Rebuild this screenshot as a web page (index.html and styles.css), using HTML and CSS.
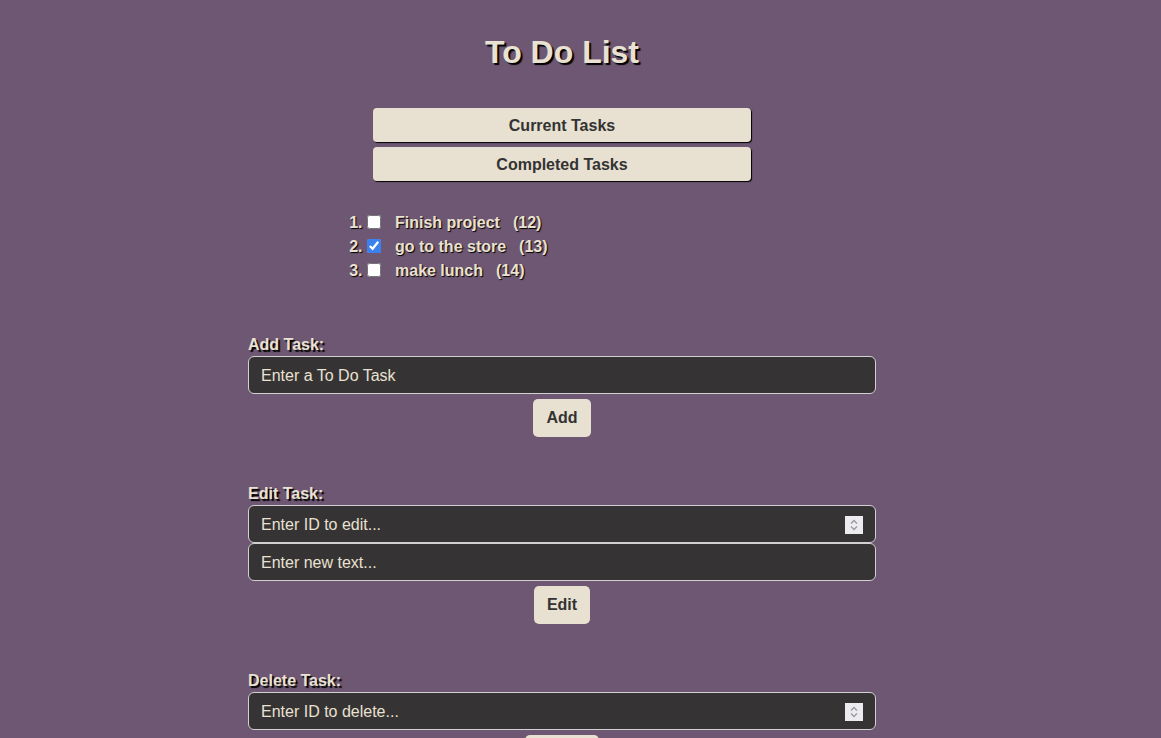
FILE: index.html
```html
<!DOCTYPE html>
<html>
<head>
<meta charset="utf-8">
<title>To Do List</title>
<link rel="stylesheet" href="styles.css">
</head>
<body>
<div class="app">
  <h1 class="title">To Do List</h1>
  <div class="tabs">
    <button class="tab">Current Tasks</button>
    <button class="tab">Completed Tasks</button>
  </div>
  <ol class="task-list">
    <li><input type="checkbox" class="check"><span class="task-text">Finish project</span><span class="task-id">(12)</span></li>
    <li><input type="checkbox" class="check" checked><span class="task-text">go to the store</span><span class="task-id">(13)</span></li>
    <li><input type="checkbox" class="check"><span class="task-text">make lunch</span><span class="task-id">(14)</span></li>
  </ol>
  <section class="form-block">
    <label class="form-label">Add Task:</label>
    <input class="field" type="text" placeholder="Enter a To Do Task">
    <button class="action">Add</button>
  </section>
  <section class="form-block">
    <label class="form-label">Edit Task:</label>
    <div class="stack">
      <input class="field" type="number" placeholder="Enter ID to edit...">
      <input class="field" type="text" placeholder="Enter new text...">
    </div>
    <button class="action">Edit</button>
  </section>
  <section class="form-block">
    <label class="form-label">Delete Task:</label>
    <input class="field" type="number" placeholder="Enter ID to delete...">
    <button class="action">Delete</button>
  </section>
</div>
</body>
</html>
```

FILE: styles.css
```css
html, body {
  margin: 0;
  background: #6e5773;
}
body {
  padding: 13px 37px 40px 0;
  font-family: "Liberation Sans", Arial, sans-serif;
  color: #e9e1d1;
}
.app {
  width: 628px;
  margin: 0 auto;
  display: flex;
  flex-direction: column;
}
.title {
  margin: 21px 0 21px;
  font-size: 32px;
  line-height: 37px;
  text-align: center;
  color: #e9e1d1;
  text-shadow: 2px 2px 1px #000;
}
.tabs {
  margin-top: 16px;
  display: flex;
  flex-direction: column;
  align-items: center;
  gap: 5px;
}
.tab {
  width: 378px;
  height: 34px;
  border: none;
  border-radius: 4px;
  background: #e8e0d0;
  color: #333;
  font-family: "Liberation Sans", Arial, sans-serif;
  font-weight: bold;
  font-size: 16px;
  box-shadow: 1px 1px 1px #000;
  padding: 1px 0 0;
}
.task-list {
  margin: 30px 0 0;
  padding-left: 119px;
  font-weight: bold;
  font-size: 16px;
  line-height: 24px;
  text-shadow: 1px 1px 1px #000;
}
.check {
  width: 14px;
  height: 14px;
  margin: 0 3px 0 0;
  vertical-align: -1px;
  accent-color: #3a80ee;
}
.task-text {
  margin-left: 11px;
}
.task-id {
  margin-left: 13px;
}
.form-block {
  margin-top: 53px;
  display: flex;
  flex-direction: column;
}
.form-block + .form-block {
  margin-top: 48px;
}
.form-label {
  font-weight: bold;
  font-size: 16px;
  line-height: 18px;
  color: #e9e1d1;
  text-shadow: 2px 2px 1px #000;
  margin-bottom: 2px;
}
.stack {
  display: flex;
  flex-direction: column;
}
.field {
  box-sizing: border-box;
  width: 628px;
  height: 38px;
  margin: 0;
  padding: 1px 12px 0;
  border: 1px solid #d2d0d2;
  border-radius: 6px;
  background: #353334;
  color: #e9e1d1;
  font-family: "Liberation Sans", Arial, sans-serif;
  font-size: 16px;
  outline: none;
}
.field::placeholder {
  color: #e9e1d1;
  opacity: 1;
}
.field::-webkit-inner-spin-button {
  -webkit-appearance: none;
  appearance: none;
  opacity: 1;
  width: 18px;
  height: 18px;
  margin: 0;
  background: #ececf0 url("data:image/svg+xml,%3Csvg xmlns='http://www.w3.org/2000/svg' width='18' height='18'%3E%3Cpath d='M6 7.5 9 4.5 12 7.5M6 10.5 9 13.5 12 10.5' fill='none' stroke='%23999' stroke-width='1.3'/%3E%3C/svg%3E") no-repeat center;
}
.action {
  align-self: center;
  margin-top: 5px;
  height: 38px;
  padding: 0 13px;
  border: none;
  border-radius: 5px;
  background: #e8e0d0;
  color: #333;
  font-family: "Liberation Sans", Arial, sans-serif;
  font-weight: bold;
  font-size: 16px;
}
```
